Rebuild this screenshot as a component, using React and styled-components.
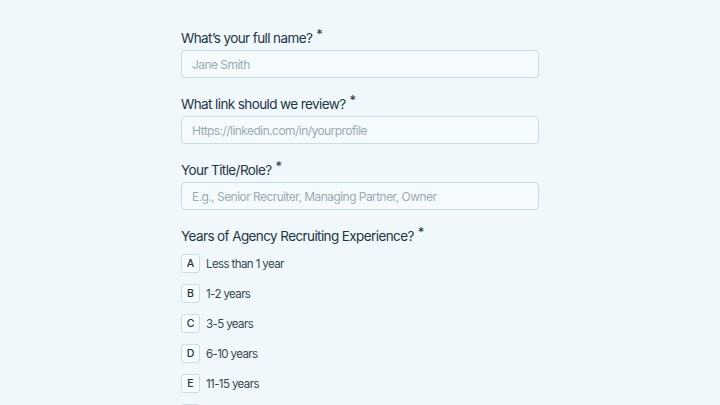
import React from "react";
import styled, { createGlobalStyle } from "styled-components";

const GlobalStyle = createGlobalStyle`
  html, body {
    margin: 0;
    padding: 0;
    background: #f0f8fb;
    font-family: Inter, "Noto Sans", sans-serif;
  }
`;

const Page = styled.div`
  width: 720px;
  height: 405px;
  overflow: hidden;
  display: flex;
  justify-content: center;
`;

const Form = styled.div`
  width: 358px;
  padding-top: 28px;
  display: flex;
  flex-direction: column;
`;

const Field = styled.div`
  display: flex;
  flex-direction: column;
  margin-bottom: 16px;
`;

const Label = styled.label`
  font-size: 13.5px;
  color: #1f3544;
  line-height: 20px;
  margin-bottom: 2px;
  letter-spacing: -0.6px;

  sup {
    font-size: 13px;
    margin-left: 4px;
    vertical-align: 4px;
    line-height: 0;
  }
`;

const Input = styled.input`
  box-sizing: border-box;
  height: 28px;
  width: 100%;
  border: 1px solid #c6dee8;
  border-radius: 4px;
  background: #f5fbfd;
  padding: 0 10px;
  font-family: inherit;
  font-size: 12px;
  letter-spacing: -0.55px;
  color: #1f3544;
  outline: none;

  &::placeholder {
    color: #9aabb4;
  }
`;

const Options = styled.div`
  display: flex;
  flex-direction: column;
  gap: 11px;
  margin-top: 6px;
`;

const Option = styled.div`
  display: flex;
  align-items: center;
  gap: 6px;
  height: 19px;
`;

const Key = styled.span`
  box-sizing: border-box;
  width: 19px;
  height: 19px;
  border: 1px solid #c9dfe8;
  border-radius: 3px;
  background: #f7fcfe;
  display: flex;
  align-items: center;
  justify-content: center;
  font-size: 10.5px;
  font-weight: 500;
  color: #23323b;
`;

const OptionText = styled.span`
  font-size: 11.5px;
  color: #37474f;
  letter-spacing: -0.6px;
`;

const fields = [
  { label: "What’s your full name?", placeholder: "Jane Smith" },
  { label: "What link should we review?", placeholder: "Https://linkedin.com/in/yourprofile" },
  { label: "Your Title/Role?", placeholder: "E.g., Senior Recruiter, Managing Partner, Owner" },
];

const choices = [
  ["A", "Less than 1 year"],
  ["B", "1-2 years"],
  ["C", "3-5 years"],
  ["D", "6-10 years"],
  ["E", "11-15 years"],
  ["F", "16+ years"],
];

export default function App() {
  return (
    <>
      <GlobalStyle />
      <Page>
        <Form>
          {fields.map((f) => (
            <Field key={f.label}>
              <Label>
                {f.label}
                <sup>*</sup>
              </Label>
              <Input placeholder={f.placeholder} />
            </Field>
          ))}
          <Label>
            Years of Agency Recruiting Experience?
            <sup>*</sup>
          </Label>
          <Options>
            {choices.map(([k, t]) => (
              <Option key={k}>
                <Key>{k}</Key>
                <OptionText>{t}</OptionText>
              </Option>
            ))}
          </Options>
        </Form>
      </Page>
    </>
  );
}
